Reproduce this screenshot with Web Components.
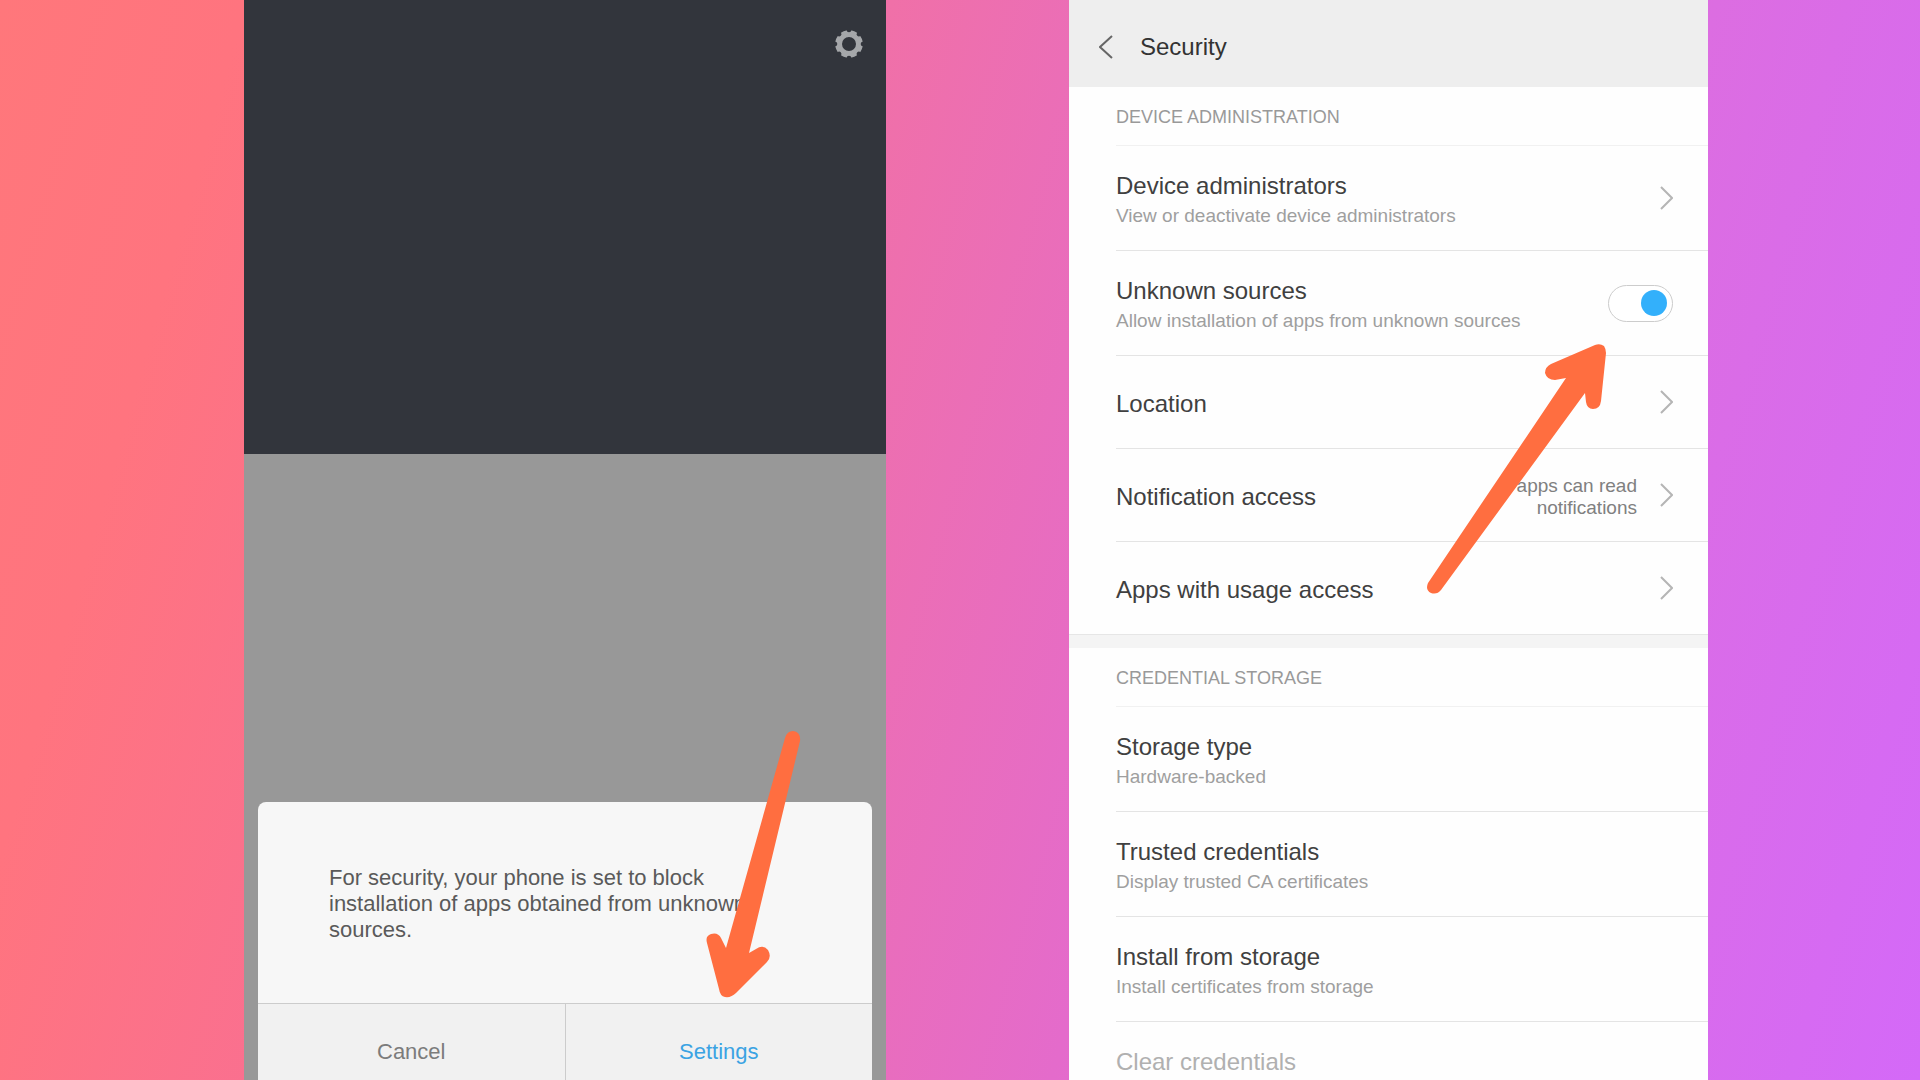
<!DOCTYPE html>
<html lang="en">
<head>
<meta charset="utf-8">
<title>Allow unknown sources</title>
<style>
html, body { margin: 0; height: 100%; overflow: hidden; }
body { font-family: "Liberation Sans", Arial, sans-serif; }
</style>
</head>
<body>
<guide-stage>
  <install-screen slot="first">
    <confirm-dialog>For security, your phone is set to block installation of apps obtained from unknown sources.</confirm-dialog>
  </install-screen>
  <settings-screen slot="second" heading="Security">
    <settings-group label="DEVICE ADMINISTRATION">
      <settings-row link label="Device administrators" note="View or deactivate device administrators"></settings-row>
      <settings-row toggle label="Unknown sources" note="Allow installation of apps from unknown sources"></settings-row>
      <settings-row link label="Location"></settings-row>
      <settings-row link label="Notification access">apps can read notifications</settings-row>
      <settings-row link label="Apps with usage access"></settings-row>
    </settings-group>
    <settings-group label="CREDENTIAL STORAGE">
      <settings-row label="Storage type" note="Hardware-backed"></settings-row>
      <settings-row label="Trusted credentials" note="Display trusted CA certificates"></settings-row>
      <settings-row label="Install from storage" note="Install certificates from storage"></settings-row>
      <settings-row disabled label="Clear credentials"></settings-row>
    </settings-group>
  </settings-screen>
</guide-stage>
<script>
class BaseElement extends HTMLElement {
  constructor() { super(); this.attachShadow({ mode: 'open' }); }
  connectedCallback() { this.shadowRoot.innerHTML = this.render(); }
}

customElements.define('guide-stage', class extends BaseElement {
  render() {
    return `<style>
      :host { display: grid; grid-template-columns: 244fr 642fr 183fr 639fr 212fr; height: 100vh; position: relative; overflow: hidden;
        background: linear-gradient(106deg, #ff777b 0%, #ff747f 11%, #fa708f 25%, #f070a8 40%, #e46bcb 61%, #dc6de1 77%, #d469f8 100%); }
      slot { display: contents; }
      ::slotted([slot=first]) { grid-column: 2; }
      ::slotted([slot=second]) { grid-column: 4; }
      svg { position: absolute; inset: 0; width: 100%; height: 100%; pointer-events: none; }
    </style>
    <slot name="first"></slot><slot name="second"></slot>
    <svg viewBox="0 0 1920 1080" preserveAspectRatio="none" fill="#ff6e40" aria-hidden="true">
      <path d="M785 738Q787 731 793 731Q801 732 800 741L749 953L756 949Q763 944 768 950Q772 957 767 962L736 993Q731 998 725 997Q720 996 719 989L707 943Q705 936 711 934Q718 932 721 938L726 948Z"/>
      <path d="M1428 583L1566 378L1555 380Q1547 380 1545 373Q1545 367 1551 364L1595 345Q1600 343 1604 346Q1606 349 1606 353L1601 401Q1600 409 1593 409Q1587 409 1586 402L1585 393L1441 590Q1437 595 1431 593Q1425 590 1428 583Z"/>
    </svg>`;
  }
});

customElements.define('install-screen', class extends BaseElement {
  render() {
    let notches = '';
    for (let i = 0; i < 8; i++) notches += `<circle cx="14" cy="0" r="2.3" fill="#32353c" transform="rotate(${i * 45} 14 14)"/>`;
    return `<style>
      :host { display: flex; flex-direction: column; height: 100vh; overflow: hidden; background: #989898; }
      header { flex: 0 0 42%; box-sizing: border-box; background: #32353c; display: flex; justify-content: flex-end; align-items: flex-start; padding: 30px 23px; }
      button { border: 0; padding: 0; background: none; display: flex; }
      main { flex: 1; padding: 348px 14px 0; }
    </style>
    <header><button aria-label="Options"><svg width="28" height="28" viewBox="0 0 28 28">
      <circle cx="14" cy="14" r="10.4" fill="none" stroke="#a5a7aa" stroke-width="6.8"/>${notches}
    </svg></button></header>
    <main><slot></slot></main>`;
  }
});

customElements.define('confirm-dialog', class extends BaseElement {
  render() {
    return `<style>
      :host { display: block; background: #f7f7f7; border-radius: 8px 8px 0 0; overflow: hidden; }
      p { margin: 0; padding: 63px 71px 60px; font-size: 22px; line-height: 26px; color: #5a5a5a; }
      footer { display: flex; border-top: 1px solid #ccc; background: #f1f1f1; }
      button { flex: 1; height: 96px; border: 0; padding: 0; background: none; font: 22px/26px "Liberation Sans", Arial, sans-serif; color: #7c7c7c; }
      button + button { border-left: 1px solid #ccc; color: #3ba3e3; }
    </style>
    <p><slot></slot></p>
    <footer><button>Cancel</button><button>Settings</button></footer>`;
  }
});

customElements.define('settings-screen', class extends BaseElement {
  render() {
    return `<style>
      :host { display: block; height: 100vh; overflow: hidden; background: #fefefe; }
      header { display: flex; align-items: center; gap: 27px; box-sizing: border-box; height: 87px; padding: 6px 30px 0; background: #eee; }
      button { border: 0; padding: 0; background: none; display: flex; }
      h1 { margin: 0; font-size: 24px; line-height: 30px; font-weight: 400; color: #333; }
    </style>
    <header><button aria-label="Back"><svg width="14" height="24" viewBox="0 0 14 24" fill="none" stroke="#666" stroke-width="2"><path d="M13 1L1 12L13 23"/></svg></button>
    <h1>${this.getAttribute('heading')}</h1></header>
    <slot></slot>`;
  }
});

customElements.define('settings-group', class extends BaseElement {
  render() {
    return `<style>
      :host { display: block; }
      .band { height: 13px; border-top: 1px solid #e6e6e6; background: #f4f4f4; }
      :host(:first-child) .band { display: none; }
      h2 { margin: 0 0 0 47px; padding: 18px 0 16px; border-bottom: 1px solid #f1f1f1; font-size: 18px; line-height: 24px; font-weight: 400; color: #999; }
    </style>
    <div class="band"></div>
    <h2>${this.getAttribute('label')}</h2><slot></slot>`;
  }
});

customElements.define('settings-row', class extends BaseElement {
  render() {
    const note = this.getAttribute('note');
    const link = this.hasAttribute('link');
    const toggle = this.hasAttribute('toggle');
    const tag = link ? 'a' : toggle ? 'label' : 'button';
    const attrs = link ? 'href="#"' : toggle ? 'for="switch"' : this.hasAttribute('disabled') ? 'disabled' : '';
    return `<style>
      :host { display: block; margin-left: 47px; border-bottom: 1px solid #e4e4e4; }
      :host(:last-child) { border-bottom: 0; }
      .row { display: flex; align-items: center; box-sizing: border-box; width: 100%; min-height: 92px; padding: 0 35px 0 0; gap: 23px;
        border: 0; background: none; text-align: left; text-decoration: none; font-family: inherit; color: #404040; }
      .text { flex: 1; display: flex; flex-direction: column; gap: 3px; padding: 25px 0 22px; }
      .title { font-size: 24px; line-height: 30px; }
      .note { font-size: 19px; line-height: 24px; color: #9f9f9f; }
      .value { max-width: 140px; padding-top: 4px; text-align: right; font-size: 19px; line-height: 22px; color: #808080; }
      .row:disabled { align-items: flex-start; color: #b0b0b0; }
      input { appearance: none; margin: 0; box-sizing: border-box; width: 65px; height: 37px; border: 1px solid #ccc; border-radius: 19px; display: flex; align-items: center; padding: 0 5px; background: #fff; }
      input:checked { justify-content: flex-end; }
      input::before { content: ""; width: 26px; height: 26px; border-radius: 50%; background: #33b0fb; }
    </style>
    <${tag} class="row" ${attrs}>
      <span class="text"><span class="title">${this.getAttribute('label')}</span>${note ? `<span class="note">${note}</span>` : ''}</span>
      ${this.textContent.trim() ? '<span class="value"><slot></slot></span>' : ''}
      ${toggle ? '<input type="checkbox" id="switch" checked>' : ''}
      ${link ? '<svg width="13" height="24" viewBox="0 0 13 24" fill="none" stroke="#b5b5b5" stroke-width="2"><path d="M1 1L12 12L1 23"/></svg>' : ''}
    </${tag}>`;
  }
});
</script>
</body>
</html>
